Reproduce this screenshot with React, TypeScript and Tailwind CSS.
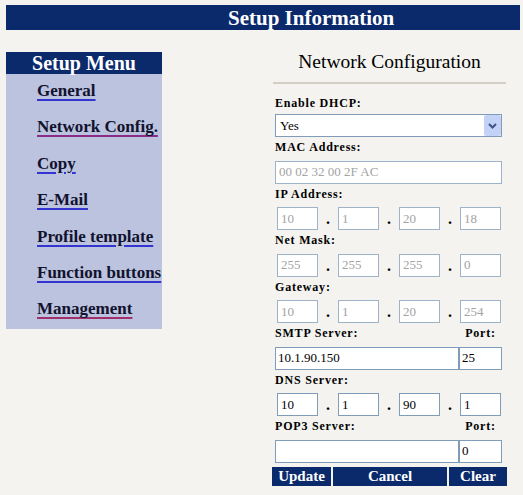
import React, { Fragment } from "react";

const menu = [
  { label: "General", cls: "decoration-[#3434d0]" },
  { label: "Network Config.", cls: "decoration-[#8a2c86]" },
  { label: "Copy", cls: "decoration-[#3434d0]" },
  { label: "E-Mail", cls: "decoration-[#3434d0]" },
  { label: "Profile template", cls: "decoration-[#3434d0]" },
  { label: "Function buttons", cls: "decoration-[#3434d0]" },
  { label: "Management", cls: "decoration-[#a0306a]" },
];

function IpRow({ vals, enabled }: { vals: string[]; enabled?: boolean }) {
  return (
    <div className="flex h-[23px] pl-[2px]">
      {vals.map((v, i) => (
        <Fragment key={i}>
          {i > 0 && (
            <span className="w-[20px] text-center text-[16px] font-bold leading-[23px] text-black">.</span>
          )}
          <input
            readOnly
            value={v}
            className={
              enabled
                ? "h-[23px] w-[41px] border border-[#7f9db9] bg-white px-[3px] text-[13px] text-black outline-none"
                : "h-[23px] w-[41px] border border-[#9fb3c8] bg-white px-[3px] text-[13px] text-[#a3a3a3] outline-none"
            }
          />
        </Fragment>
      ))}
    </div>
  );
}

function Label({ text, port }: { text: string; port?: boolean }) {
  return (
    <div className="flex h-[23.5px] text-[12px] font-bold leading-[21px] tracking-[0.8px] text-black">
      <div className="flex-1">{text}</div>
      {port && <div className="w-[43px] text-center">Port:</div>}
    </div>
  );
}

export default function App() {
  return (
    <div
      className="relative h-[495px] w-[523px] overflow-hidden bg-[#f4f3ef]"
      style={{ fontFamily: '"Liberation Serif", "Times New Roman", serif' }}
    >
      <div className="ml-[6px] mt-[5px] h-[25px] w-[514px] bg-[#0b2a6c] pl-[222px] pt-[1px] text-[21px] font-bold leading-[25px] text-white">
        Setup Information
      </div>
      <div className="flex items-start pl-[6px]">
        <div className="mt-[22px] w-[156px]">
          <div className="h-[22px] bg-[#0b2a6c] text-center text-[20px] font-bold leading-[22px] text-white">
            Setup Menu
          </div>
          <div className="bg-[#bbc3df]">
            {menu.map((m) => (
              <div key={m.label} className="h-[36.4px] pl-[31px] text-[17px] font-bold leading-[34.4px]">
                <a
                  href="#"
                  className={`text-[#12122e] underline decoration-[1.5px] underline-offset-[3px] ${m.cls}`}
                >
                  {m.label}
                </a>
              </div>
            ))}
          </div>
        </div>
        <div className="ml-[109px] w-[237px] pt-[20px]">
          <div className="h-[24px] text-center text-[19.5px] leading-[24px] text-black">Network Configuration</div>
          <div className="mx-[2px] mt-[8px] h-[2px] bg-[#d4cfc4]" />
          <div className="ml-[4px] w-[227px]">
            <div className="mt-[9px] h-[21px] text-[12px] font-bold leading-[21px] tracking-[0.8px] text-black">
              Enable DHCP:
            </div>
            <div className="relative flex h-[23px] items-center border border-[#7f9db9] bg-white pl-[4px] text-[13px] text-black">
              <span>Yes</span>
              <div className="absolute right-0 top-0 flex h-[21px] w-[17px] items-center justify-center rounded-[2px] bg-[#c3d3f7]">
                <svg width="9" height="6" viewBox="0 0 9 6">
                  <path d="M1 1 L4.5 4.5 L8 1" fill="none" stroke="#3f5486" strokeWidth="2" />
                </svg>
              </div>
            </div>
            <Label text="MAC Address:" />
            <input
              readOnly
              value="00 02 32 00 2F AC"
              className="block h-[23px] w-[227px] border border-[#9fb3c8] bg-white px-[3px] text-[13px] text-[#a3a3a3] outline-none"
            />
            <Label text="IP Address:" />
            <IpRow vals={["10", "1", "20", "18"]} />
            <Label text="Net Mask:" />
            <IpRow vals={["255", "255", "255", "0"]} />
            <Label text="Gateway:" />
            <IpRow vals={["10", "1", "20", "254"]} />
            <Label text="SMTP Server:" port />
            <div className="flex h-[23px]">
              <input
                readOnly
                value="10.1.90.150"
                className="h-[23px] w-[184px] border border-[#7f9db9] bg-white px-[2px] text-[13px] text-black outline-none"
              />
              <input
                readOnly
                value="25"
                className="h-[23px] w-[43px] border border-[#7f9db9] bg-white px-[2px] text-[13px] text-black outline-none"
              />
            </div>
            <Label text="DNS Server:" />
            <IpRow vals={["10", "1", "90", "1"]} enabled />
            <Label text="POP3 Server:" port />
            <div className="flex h-[23px]">
              <input
                readOnly
                value=""
                className="h-[23px] w-[184px] border border-[#7f9db9] bg-white px-[2px] text-[13px] text-black outline-none"
              />
              <input
                readOnly
                value="0"
                className="h-[23px] w-[43px] border border-[#7f9db9] bg-white px-[2px] text-[13px] text-black outline-none"
              />
            </div>
          </div>
          <div className="ml-[1px] mt-[4.5px] flex h-[19px] w-[235px] gap-[2px] text-[15px] font-bold leading-[19px] text-white">
            <button className="w-[59px] bg-[#0b2a6c] text-center">Update</button>
            <button className="w-[114px] bg-[#0b2a6c] text-center">Cancel</button>
            <button className="w-[58px] bg-[#0b2a6c] text-center">Clear</button>
          </div>
        </div>
      </div>
    </div>
  );
}
